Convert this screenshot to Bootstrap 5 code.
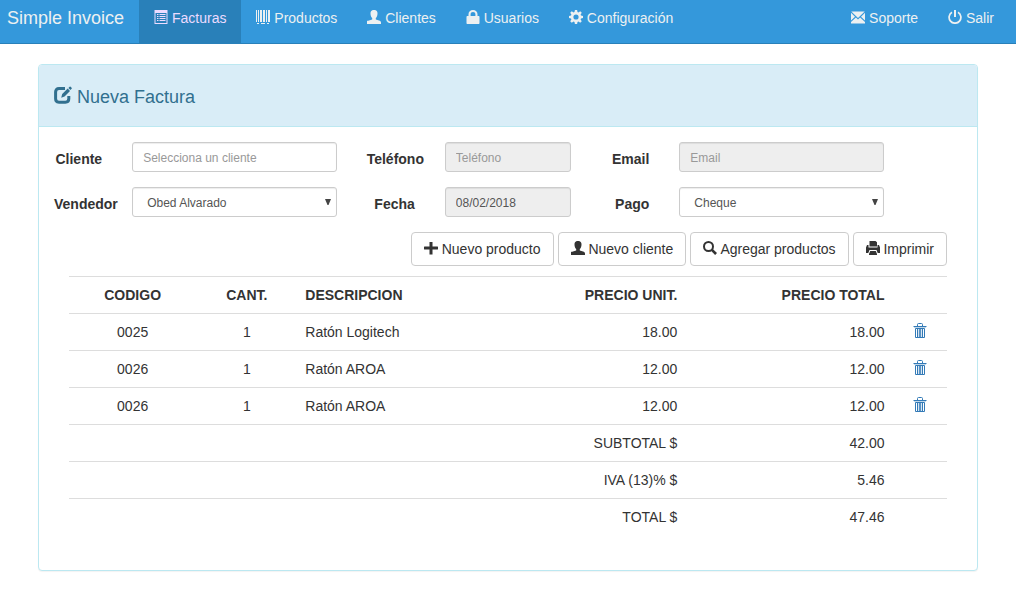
<!DOCTYPE html>
<html lang="es">
<head>
<meta charset="utf-8">
<meta name="viewport" content="width=device-width, initial-scale=1">
<title>Simple Invoice</title>
<link href="https://cdn.jsdelivr.net/npm/bootstrap@5.3.0/dist/css/bootstrap.min.css" rel="stylesheet">
<style>
body { font-family: "Liberation Sans", Arial, sans-serif; font-size: 14px; line-height: 20px; color: #333; background: #fff; }
.glyph { width: 14px; height: 14px; fill: currentColor; vertical-align: -1px; }
.topbar { background: #3498db; border-bottom: 1px solid #2980b9; --bs-navbar-color: #ecf0f1; }
.topbar .navbar-brand { color: #ecf0f1; font-size: 18px; line-height: 20px; padding: 8px 15px 15px 7px; margin: 0; }
.topbar .nav-link { color: #ecf0f1; padding: 8px 15px 15px !important; white-space: nowrap; }
.topbar .nav-link.active { background: #2980b9; color: #ecdbff; }
.topbar .end-links { margin-right: 7px; }
.page-wrap { padding: 20px 38px; }
.panel-box { border: 1px solid #bce8f1; border-radius: 4px; box-shadow: 0 1px 1px rgba(0,0,0,.05); --bs-card-border-radius: 4px; --bs-card-inner-border-radius: 3px; color: #333; }
.panel-box .card-header { background: #d9edf7; border-bottom: 1px solid #bce8f1; color: #31708f; padding: 21px 15px 18px; }
.panel-title { font-size: 18px; line-height: 21px; font-weight: 400; margin: 0; }
.panel-title .glyph { width: 18px; height: 18px; }
.panel-box .card-body { padding: 15px; }
.form-line { --bs-gutter-x: 30px; margin-bottom: 15px; }
.form-line label { padding-top: 7px; font-weight: 700; line-height: 20px; text-align: right; white-space: nowrap; }
.form-line .form-control, .form-line .form-select { height: 30px; min-height: 30px; font-size: 12px; line-height: 18px; color: #555; border: 1px solid #ccc; border-radius: 3px; padding: 6px 10px 4px; box-shadow: inset 0 1px 1px rgba(0,0,0,.075); }
.form-line .form-select { padding-left: 14px; background-image: url("data:image/svg+xml,%3Csvg xmlns='http://www.w3.org/2000/svg' viewBox='0 0 6 6'%3E%3Cpath fill='%23444' d='M0 0h6L3.500 6h-1z'/%3E%3C/svg%3E"); background-size: 6px 6px; background-position: right 5px top 11px; }
.form-line .form-control::placeholder { color: #999; opacity: 1; }
.form-line .form-control[readonly] { background: #eee; }
.tool-btns { gap: 4px; margin: 0 15px 10px; }
.btn-plain { --bs-btn-padding-x: 12px; --bs-btn-padding-y: 6px; --bs-btn-font-size: 14px; --bs-btn-line-height: 20px; --bs-btn-color: #333; --bs-btn-bg: #fff; --bs-btn-border-color: #ccc; --bs-btn-border-radius: 4px; --bs-btn-hover-bg: #e6e6e6; --bs-btn-hover-border-color: #adadad; }
.items-wrap { margin: 0 15px 20px; }
.items-table { table-layout: fixed; color: #333; margin: 0; }
.items-table > :not(caption) > * > * { padding: 8px; border-width: 1px 0 0; border-color: #ddd; line-height: 20px; }
.items-table a { color: #337ab7; }
.items-table .glyph { height: 16px; vertical-align: -2px; }
.w-code { width: 14.5%; } .w-qty { width: 11.5%; } .w-desc { width: 22%; } .w-unit { width: 22.2%; } .w-total { width: 23.6%; } .w-act { width: 6.2%; }
</style>
</head>
<body>
<svg class="d-none" aria-hidden="true">
  <symbol id="i-list" viewBox="0 0 14 14"><path fill-rule="evenodd" d="M.5 0h13v14H.5zM1.500 3v10h11V3z"/><path d="M3 4h1.500v1H3zM5.500 4H11.500v1h-6zM3 6h1.500v1H3zM5.500 6H11.500v1h-6zM3 8h1.500v1H3zM5.500 8H11.500v1h-6zM3 10h1.500v1H3zM5.500 10H11.500v1h-6z"/></symbol>
  <symbol id="i-barcode" viewBox="0 0 14 14"><path d="M0 0h1v12H0zM2 0h1v12H2zM4 0h2v12H4zM7 0h2v12H7zM10 0h1v12h-1zM12 0h2v12h-2zM1 13h2v1H1zM5 13h4v1H5zM11 13h2v1h-2z"/></symbol>
  <symbol id="i-user" viewBox="0 0 14 14"><path d="M5 .4C5.800-.1 8.200-.1 9 .4c1.200.7 1.500 1.600 1.500 3 0 1.700-.5 3.500-1.700 4.600v1.400l4 1.400c.8.400 1.200.9 1.200 1.700V14H0v-2.500c0-.8.400-.3 1.200-.7l4-1.400V8C4 6.900 3.500 5.100 3.500 3.400 3.500 2 3.800 1.100 5 .4z"/></symbol>
  <symbol id="i-lock" viewBox="0 0 14 14"><path fill-rule="evenodd" d="M.5 7c0-.6.400-1 1-1H2.500V4.200C2.500 1.700 4.400 0 7 0s4.500 1.700 4.500 4.200V6h1c.6 0 1 .4 1 1v6c0 .6-.4 1-1 1h-11c-.6 0-1-.4-1-1zM4.600 6h4.800V4.300C9.400 2.900 8.400 2 7 2s-2.400.9-2.400 2.300z"/></symbol>
  <symbol id="i-cog" viewBox="0 0 14 14"><path fill-rule="evenodd" d="M5.900 0h2.200l.4 2 1 .4 1.700-1.200 1.600 1.600-1.200 1.700.4 1 2 .4v2.200l-2 .4-.4 1 1.200 1.700-1.600 1.600-1.700-1.200-1 .4-.4 2H5.900l-.4-2-1-.4-1.700 1.200-1.600-1.600 1.200-1.700-.4-1-2-.4V5.900l2-.4.4-1-1.200-1.700 1.600-1.600 1.700 1.200 1-.4zM7 4.400a2.600 2.600 0 1 0 0 5.200 2.600 2.600 0 0 0 0-5.200z"/></symbol>
  <symbol id="i-mail" viewBox="0 0 14 14"><path d="M.3 1.500h13.400L7 8zM0 2.800l4 3.900-4 3.900zM14 2.800v7.800l-4-3.900zM4.900 7.600 7 9.600l2.100-2L14 12v1.500H0V12z"/></symbol>
  <symbol id="i-off" viewBox="0 0 14 14"><path fill="none" stroke="currentColor" stroke-width="1.700" d="M4 2.200a5.900 5.900 0 1 0 6 0"/><path d="M6 0h2v7H6z"/></symbol>
  <symbol id="i-edit" viewBox="0 0 18 18"><path fill="none" stroke="currentColor" stroke-width="3" d="M11 2.600H5Q1.600 2.600 1.600 6v6.800q0 3.400 3.400 3.400h6.400q3.400 0 3.400-3.400V10"/><path d="M7.200 11.700 8.200 8l5.500-5.400 2.300 2.300-5.500 5.500zM14.400 1.900l1.200-1.200q.5-.5 1 0l1 1q.5.500 0 1l-1.200 1.200z"/></symbol>
  <symbol id="i-plus" viewBox="0 0 14 14"><path d="M5.500 1h3v4.500H13.500q.5 0 .5.500v2q0 .5-.5.500H8.500V13.500h-3V8.500H.5Q0 8.500 0 8V6q0-.5.500-.5h5z"/></symbol>
  <symbol id="i-search" viewBox="0 0 14 14"><circle cx="5.500" cy="5.500" r="4.500" fill="none" stroke="currentColor" stroke-width="2"/><path d="m8 9.800 1.800-1.800 4.200 4.100-1.900 1.900z"/></symbol>
  <symbol id="i-print" viewBox="0 0 14 14"><path d="M3.500 0h6L11 1.300V5.500H3.500zM1 4h1.500v2.500h9V4H13l1 2.500V12h-2.300L10.500 9h-7l-1.200 3H0V6.500zM4.200 10h5.600l1.200 3v1H3v-1z"/></symbol>
  <symbol id="i-trash" viewBox="0 0 14 16"><path fill="none" stroke="currentColor" d="M.5 3.500h13M4.500 3V1.500Q4.500.5 5.500.5h3q1 0 1 1V3M2.500 5.500h9v9h-9zM4.500 6v8M6.300 6v8M7.700 6v8M9.500 6v8"/><path opacity=".3" d="M1 4h12v1H1z"/></symbol>
</svg>

<nav class="navbar navbar-expand topbar p-0">
  <div class="container-fluid p-0 align-items-start">
    <a class="navbar-brand" href="#">Simple Invoice</a>
    <ul class="navbar-nav me-auto">
      <li class="nav-item"><a class="nav-link active" aria-current="page" href="#"><svg class="glyph"><use href="#i-list"/></svg> Facturas</a></li>
      <li class="nav-item"><a class="nav-link" href="#"><svg class="glyph"><use href="#i-barcode"/></svg> Productos</a></li>
      <li class="nav-item"><a class="nav-link" href="#"><svg class="glyph"><use href="#i-user"/></svg> Clientes</a></li>
      <li class="nav-item"><a class="nav-link" href="#"><svg class="glyph"><use href="#i-lock"/></svg> Usuarios</a></li>
      <li class="nav-item"><a class="nav-link" href="#"><svg class="glyph"><use href="#i-cog"/></svg> Configuración</a></li>
    </ul>
    <ul class="navbar-nav end-links">
      <li class="nav-item"><a class="nav-link" href="#"><svg class="glyph"><use href="#i-mail"/></svg> Soporte</a></li>
      <li class="nav-item"><a class="nav-link" href="#"><svg class="glyph"><use href="#i-off"/></svg> Salir</a></li>
    </ul>
  </div>
</nav>

<main class="page-wrap">
  <div class="card panel-box">
    <div class="card-header">
      <h4 class="panel-title"><svg class="glyph"><use href="#i-edit"/></svg> Nueva Factura</h4>
    </div>
    <div class="card-body">
      <form>
        <div class="row form-line">
          <label class="col-1" for="cliente">Cliente</label>
          <div class="col-3"><input type="text" class="form-control" id="cliente" placeholder="Selecciona un cliente"></div>
          <label class="col-1" for="telefono">Teléfono</label>
          <div class="col-2"><input type="text" class="form-control" id="telefono" placeholder="Teléfono" readonly></div>
          <label class="col-1" for="email">Email</label>
          <div class="col-3"><input type="text" class="form-control" id="email" placeholder="Email" readonly></div>
        </div>
        <div class="row form-line">
          <label class="col-1" for="vendedor">Vendedor</label>
          <div class="col-3"><select class="form-select" id="vendedor"><option>Obed Alvarado</option></select></div>
          <label class="col-1" for="fecha">Fecha</label>
          <div class="col-2"><input type="text" class="form-control" id="fecha" value="08/02/2018" readonly></div>
          <label class="col-1" for="pago">Pago</label>
          <div class="col-3"><select class="form-select" id="pago"><option>Cheque</option></select></div>
        </div>
        <div class="d-flex flex-wrap justify-content-end tool-btns">
          <button type="button" class="btn btn-plain"><svg class="glyph"><use href="#i-plus"/></svg> Nuevo producto</button>
          <button type="button" class="btn btn-plain"><svg class="glyph"><use href="#i-user"/></svg> Nuevo cliente</button>
          <button type="button" class="btn btn-plain"><svg class="glyph"><use href="#i-search"/></svg> Agregar productos</button>
          <button type="button" class="btn btn-plain"><svg class="glyph"><use href="#i-print"/></svg> Imprimir</button>
        </div>
      </form>
      <div class="items-wrap">
        <table class="table items-table">
          <thead>
            <tr>
              <th class="w-code text-center">CODIGO</th>
              <th class="w-qty text-center">CANT.</th>
              <th class="w-desc">DESCRIPCION</th>
              <th class="w-unit text-end">PRECIO UNIT.</th>
              <th class="w-total text-end">PRECIO TOTAL</th>
              <th class="w-act"></th>
            </tr>
          </thead>
          <tbody>
            <tr><td class="text-center">0025</td><td class="text-center">1</td><td>Ratón Logitech</td><td class="text-end">18.00</td><td class="text-end">18.00</td><td class="text-center"><a href="#" aria-label="Eliminar"><svg class="glyph"><use href="#i-trash"/></svg></a></td></tr>
            <tr><td class="text-center">0026</td><td class="text-center">1</td><td>Ratón AROA</td><td class="text-end">12.00</td><td class="text-end">12.00</td><td class="text-center"><a href="#" aria-label="Eliminar"><svg class="glyph"><use href="#i-trash"/></svg></a></td></tr>
            <tr><td class="text-center">0026</td><td class="text-center">1</td><td>Ratón AROA</td><td class="text-end">12.00</td><td class="text-end">12.00</td><td class="text-center"><a href="#" aria-label="Eliminar"><svg class="glyph"><use href="#i-trash"/></svg></a></td></tr>
            <tr><td class="text-end" colspan="4">SUBTOTAL $</td><td class="text-end">42.00</td><td></td></tr>
            <tr><td class="text-end" colspan="4">IVA (13)% $</td><td class="text-end">5.46</td><td></td></tr>
            <tr><td class="text-end" colspan="4">TOTAL $</td><td class="text-end">47.46</td><td></td></tr>
          </tbody>
        </table>
      </div>
    </div>
  </div>
</main>
<script src="https://cdn.jsdelivr.net/npm/bootstrap@5.3.0/dist/js/bootstrap.bundle.min.js"></script>
</body>
</html>
